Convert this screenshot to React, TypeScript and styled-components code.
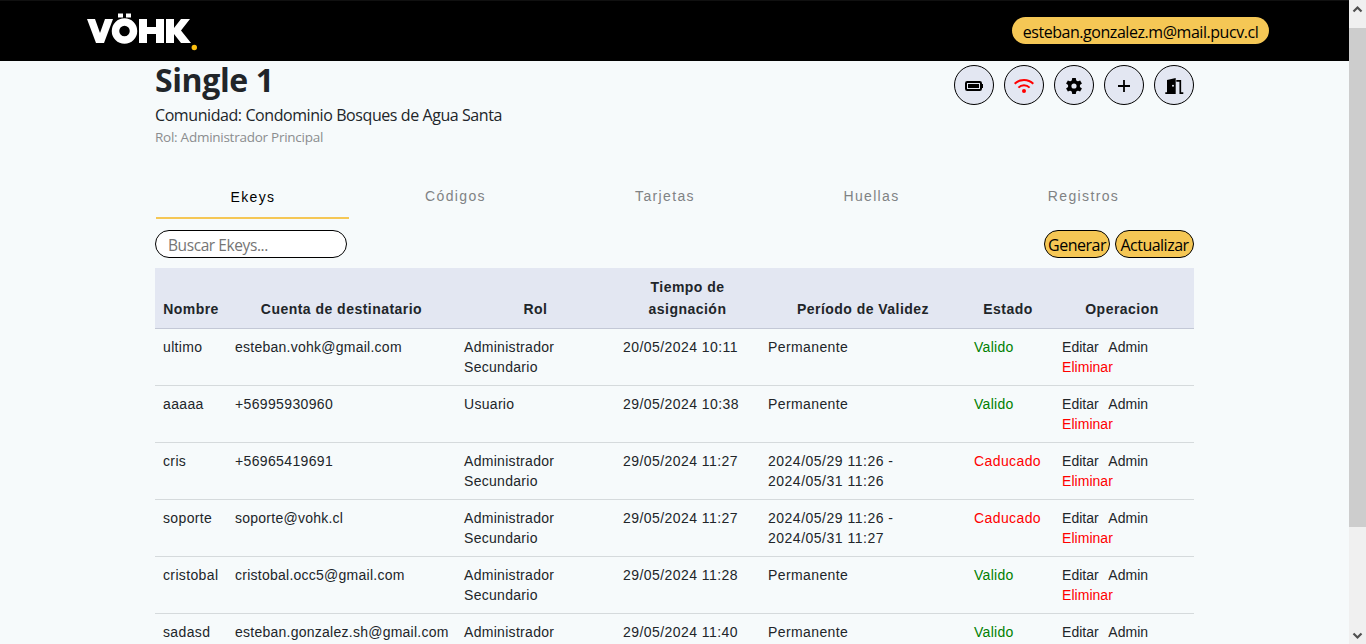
import React from 'react';
import styled, { createGlobalStyle } from 'styled-components';

const humanist = `"Open Sans", "Noto Sans", sans-serif`;
const grotesque = `"Liberation Sans", Arial, sans-serif`;

const GlobalStyle = createGlobalStyle`
  * { box-sizing: border-box; }
  body { margin: 0; overflow: hidden; background: #f6fafb; color: #212529; font-family: ${grotesque}; }
`;

const Screen = styled.div`
  display: flex;
  height: 644px;
  overflow: hidden;
`;

const Page = styled.div`
  flex: 1;
  min-width: 0;
  height: 644px;
  overflow: hidden;
`;

const TopBar = styled.header`
  display: flex;
  justify-content: space-between;
  align-items: flex-start;
  height: 61px;
  padding: 11px 80px 0 85px;
  background: #000;
  border-top: 1px solid #101010;
`;

const Logo = styled.svg`
  display: block;
  width: 115px;
  height: 40px;
`;

const Account = styled.div`
  width: 257px;
  height: 27px;
  margin-top: 5px;
  border-radius: 14px;
  background: #f5c755;
  color: #000;
  font: 16px/31px ${humanist};
  letter-spacing: -0.45px;
  text-align: center;
  white-space: nowrap;
`;

const Main = styled.main`
  width: 1039px;
  margin-left: 155px;
`;

const Heading = styled.section`
  display: flex;
  justify-content: space-between;
  height: 122px;
`;

const Title = styled.h1`
  margin: 0;
  font: 700 32px/38px ${humanist};
  letter-spacing: -0.4px;
`;

const Community = styled.p`
  margin: 4px 0 0;
  font: 16px/24px ${humanist};
  letter-spacing: -0.42px;
`;

const Role = styled.p`
  margin: 0;
  font: 13.5px/20px ${humanist};
  letter-spacing: -0.26px;
  color: #8b8d8f;
`;

const Actions = styled.div`
  display: flex;
  gap: 10px;
  padding-top: 4px;
`;

const RoundButton = styled.button<{ $color?: string }>`
  display: flex;
  align-items: center;
  justify-content: center;
  width: 40px;
  height: 40px;
  padding: 0;
  border: 1px solid #000;
  border-radius: 50%;
  background: #e3e7f2;
  color: ${({ $color }) => $color ?? '#000'};
`;

const Tabs = styled.nav`
  display: flex;
  height: 36px;
  padding-left: 1px;
`;

const Tab = styled.div<{ $width: number; $active?: boolean }>`
  width: ${({ $width }) => $width}px;
  height: 36px;
  padding: ${({ $active }) => ($active ? '4px 0 0 1px' : '3px 0 0')};
  border-bottom: 2px solid ${({ $active }) => ($active ? '#f5c755' : 'transparent')};
  color: ${({ $active }) => ($active ? '#000' : '#808284')};
  font-size: 14px;
  line-height: 20px;
  letter-spacing: 1.35px;
  text-align: center;
`;

const Toolbar = styled.div`
  display: flex;
  align-items: center;
  gap: 5px;
  height: 49px;
  padding-top: 1px;
`;

const Search = styled.input`
  width: 192px;
  height: 28px;
  margin-right: auto;
  padding: 2px 12px 0;
  border: 1px solid #000;
  border-radius: 14px;
  background: #fff;
  font: 15.5px ${humanist};
  letter-spacing: -0.42px;
  &::placeholder { color: #757575; opacity: 1; }
`;

const PillButton = styled.button<{ $width: number }>`
  width: ${({ $width }) => $width}px;
  height: 28px;
  padding: 3px 0 0;
  border: 1px solid #000;
  border-radius: 14px;
  background: #f5c755;
  color: #000;
  font: 16px/23px ${humanist};
  letter-spacing: -0.5px;
  white-space: nowrap;
`;

const Table = styled.table`
  width: 1039px;
  table-layout: fixed;
  border-collapse: separate;
  border-spacing: 0;
  font-size: 14px;
`;

const HeadCell = styled.th<{ $nudge?: number }>`
  height: 61px;
  padding: 8px ${({ $nudge }) => 8 + ($nudge ?? 0)}px 8px 8px;
  border-bottom: 1px solid #c3c8d6;
  background: #e3e7f2;
  line-height: 22px;
  letter-spacing: 0.47px;
  text-align: center;
  vertical-align: bottom;
`;

const Cell = styled.td<{ $color?: string; $spacing?: number }>`
  height: 57px;
  padding: 8px 0 8px 8px;
  border-bottom: 1px solid #d5dadc;
  color: ${({ $color }) => $color ?? '#212529'};
  line-height: 20px;
  letter-spacing: ${({ $spacing }) => $spacing ?? 0.4}px;
  vertical-align: top;
  white-space: pre-line;
`;

const Action = styled.span<{ $danger?: boolean }>`
  display: ${({ $danger }) => ($danger ? 'block' : 'inline-block')};
  margin-right: 9.5px;
  color: ${({ $danger }) => ($danger ? '#f00' : 'inherit')};
`;

const Scrollbar = styled.aside`
  display: flex;
  flex-direction: column;
  width: 17px;
  height: 644px;
  background: #f0f0f0;
`;

const Thumb = styled.div`
  height: 499px;
  background: #cdcdcd;
`;

const ScrollArrow = styled.svg`
  display: block;
  width: 17px;
  height: 28px;
  fill: none;
  stroke: #505050;
  stroke-width: 2.2;

  &:last-child { margin-top: auto; }
`;

const LogoMark = () => (
  <Logo viewBox="0 0 115 40" aria-label="VÖHK">
    <g fill="#fff">
      <path d="M2 7H10L15 21L20 7H28L19 31H11Z" />
      <rect x="33" y="1.500" width="5" height="4" />
      <rect x="41" y="1.500" width="5" height="4" />
      <path d="M54 7H62V15H71V7H79V31H71V22H62V31H54Z" />
      <path d="M81 7H89V16L96 7H105L96 18.500L106 31H96L89 22V31H81Z" />
    </g>
    <circle cx="39.500" cy="19" r="9" fill="none" stroke="#fff" strokeWidth="7.500" />
    <circle cx="109.300" cy="35.500" r="2.700" fill="#fdc010" />
  </Logo>
);

const Battery = () => (
  <svg width="20" height="20" viewBox="0 0 20 20">
    <rect x="2" y="7" width="15" height="8" rx="1.200" fill="none" stroke="currentColor" strokeWidth="2" />
    <rect x="4" y="9" width="11" height="4" fill="currentColor" />
    <rect x="17.500" y="9" width="1.500" height="4" fill="currentColor" />
  </svg>
);

const Wifi = () => (
  <svg width="22" height="20" viewBox="0 0 22 20" fill="none" stroke="currentColor" strokeWidth="2">
    <path d="M1.700 8.700C6.800 3.600 15.200 3.600 20.300 8.700" />
    <path d="M5.400 12.600C8.500 9.500 13.500 9.500 16.600 12.600" />
    <circle cx="11" cy="16" r="2" fill="currentColor" stroke="none" />
  </svg>
);

const Gear = () => (
  <svg width="20" height="20" viewBox="0 0 20 20">
    <circle cx="10" cy="11" r="4.300" fill="none" stroke="currentColor" strokeWidth="3.400" />
    {[0, 60, 120, 180, 240, 300].map((angle) => (
      <path key={angle} d="M7.600 7L8.200 2.900H11.800L12.400 7Z" fill="currentColor" transform={`rotate(${angle} 10 11)`} />
    ))}
  </svg>
);

const Plus = () => (
  <svg width="20" height="20" viewBox="0 0 20 20" stroke="currentColor" strokeWidth="1.800">
    <path d="M4 11H16M10 5V17" />
  </svg>
);

const Door = () => (
  <svg width="20" height="20" viewBox="0 0 20 20">
    <path
      fill="currentColor"
      fillRule="evenodd"
      d="M3 4.900L11.700 3V19H1.300V17.300H3ZM9 9.700A1 1 0 1 0 9 11.700A1 1 0 1 0 9 9.700Z"
    />
    <path d="M12.300 5.900H16.300V18.200H19.300" fill="none" stroke="currentColor" strokeWidth="1.700" />
  </svg>
);

const columns: [string, number, number?][] = [
  ['Nombre', 72], ['Cuenta de destinatario', 229], ['Rol', 159], ['Tiempo de asignación', 145],
  ['Período de Validez', 206], ['Estado', 88, 4], ['Operacion', 140, 4],
];

const admin = 'Administrador\nSecundario';

const rows = [
  ['ultimo', 'esteban.vohk@gmail.com', admin, '20/05/2024 10:11', 'Permanente', 'Valido'],
  ['aaaaa', '+56995930960', 'Usuario', '29/05/2024 10:38', 'Permanente', 'Valido'],
  ['cris', '+56965419691', admin, '29/05/2024 11:27', '2024/05/29 11:26 -\n2024/05/31 11:26', 'Caducado'],
  ['soporte', 'soporte@vohk.cl', admin, '29/05/2024 11:27', '2024/05/29 11:26 -\n2024/05/31 11:27', 'Caducado'],
  ['cristobal', 'cristobal.occ5@gmail.com', admin, '29/05/2024 11:28', 'Permanente', 'Valido'],
  ['sadasd', 'esteban.gonzalez.sh@gmail.com', admin, '29/05/2024 11:40', 'Permanente', 'Valido'],
];

export default function App() {
  return (
    <Screen>
      <GlobalStyle />
      <Page>
        <TopBar>
          <LogoMark />
          <Account>esteban.gonzalez.m@mail.pucv.cl</Account>
        </TopBar>
        <Main>
          <Heading>
            <div>
              <Title>Single 1</Title>
              <Community>Comunidad: Condominio Bosques de Agua Santa</Community>
              <Role>Rol: Administrador Principal</Role>
            </div>
            <Actions>
              <RoundButton aria-label="Batería"><Battery /></RoundButton>
              <RoundButton aria-label="Wifi" $color="#f00"><Wifi /></RoundButton>
              <RoundButton aria-label="Ajustes"><Gear /></RoundButton>
              <RoundButton aria-label="Agregar"><Plus /></RoundButton>
              <RoundButton aria-label="Abrir"><Door /></RoundButton>
            </Actions>
          </Heading>
          <Tabs>
            <Tab $width={193} $active>Ekeys</Tab>
            <Tab $width={213}>Códigos</Tab>
            <Tab $width={206}>Tarjetas</Tab>
            <Tab $width={207}>Huellas</Tab>
            <Tab $width={217}>Registros</Tab>
          </Tabs>
          <Toolbar>
            <Search placeholder="Buscar Ekeys..." />
            <PillButton $width={66}>Generar</PillButton>
            <PillButton $width={79}>Actualizar</PillButton>
          </Toolbar>
          <Table>
            <colgroup>
              {columns.map(([name, width]) => <col key={name} width={width} />)}
            </colgroup>
            <thead>
              <tr>
                {columns.map(([name, , nudge]) => <HeadCell key={name} $nudge={nudge}>{name}</HeadCell>)}
              </tr>
            </thead>
            <tbody>
              {rows.map(([name, account, role, assigned, validity, status]) => (
                <tr key={name}>
                  <Cell $spacing={0.36}>{name}</Cell>
                  <Cell $spacing={account.includes('@') ? 0.25 : 0.36}>{account}</Cell>
                  <Cell $spacing={0.3}>{role}</Cell>
                  <Cell $spacing={0.44}>{assigned}</Cell>
                  <Cell $spacing={validity === 'Permanente' ? 0.4 : 0.5}>{validity}</Cell>
                  <Cell $spacing={status === 'Valido' ? 0.3 : 0.4} $color={status === 'Valido' ? '#008000' : '#f00'}>
                    {status}
                  </Cell>
                  <Cell $spacing={0.04}>
                    <Action>Editar</Action>
                    <Action>Admin</Action>
                    <Action $danger>Eliminar</Action>
                  </Cell>
                </tr>
              ))}
            </tbody>
          </Table>
        </Main>
      </Page>
      <Scrollbar>
        <ScrollArrow viewBox="0 0 17 28"><path d="M4.500 11.500L8.500 7.500L12.500 11.500" /></ScrollArrow>
        <Thumb />
        <ScrollArrow viewBox="0 0 17 28"><path d="M4.500 17.500L8.500 21.500L12.500 17.500" /></ScrollArrow>
      </Scrollbar>
    </Screen>
  );
}
